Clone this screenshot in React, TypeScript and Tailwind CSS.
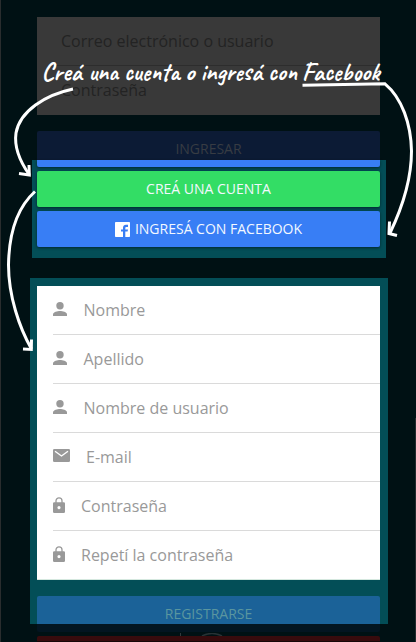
import React from 'react';

const PersonIcon = () => (
  <svg className="block h-[14px] w-[14px] shrink-0" viewBox="0 0 14 14" fill="#999">
    <circle cx="7" cy="3.7" r="3.7" />
    <path d="M0 14v-1.7C0 10 4.6 8.9 7 8.9s7 1.1 7 3.4V14z" />
  </svg>
);

const MailIcon = () => (
  <svg className="block h-[13px] w-[17px] shrink-0" viewBox="0 0 17 13" fill="#999">
    <rect width="17" height="13" rx="1.3" />
    <path d="M2 2.3 8.5 7 15 2.3" fill="none" stroke="#fff" strokeWidth="1.4" />
  </svg>
);

const LockIcon = () => (
  <svg className="block h-[16px] w-[12px] shrink-0" viewBox="0 0 12 16" fill="#999">
    <path d="M3 6V3.8a3 3 0 0 1 6 0V6" fill="none" stroke="#999" strokeWidth="1.3" />
    <path
      fillRule="evenodd"
      d="M1.3 5.3h9.4A1.3 1.3 0 0 1 12 6.6v8.1a1.3 1.3 0 0 1-1.3 1.3H1.3A1.3 1.3 0 0 1 0 14.7V6.6a1.3 1.3 0 0 1 1.3-1.3zM6 9a1.6 1.6 0 1 0 0 3.2A1.6 1.6 0 0 0 6 9z"
    />
  </svg>
);

const FacebookIcon = () => (
  <svg className="block h-[15px] w-[15px]" viewBox="0 0 15 15">
    <rect width="15" height="15" rx="0.8" fill="#fff" />
    <path
      d="M8 15V9.6H6V7.4h2V5.8C8 3.7 9.2 2.7 11 2.7h2v2.2h-1.4c-1 0-1.3.5-1.3 1.2v1.3H13l-.4 2.2h-2.3V15z"
      fill="#387ef5"
    />
  </svg>
);

const fields = [
  { label: 'Nombre', icon: <PersonIcon />, gap: 'gap-[16.5px]', lift: '-mt-0.5' },
  { label: 'Apellido', icon: <PersonIcon />, gap: 'gap-[16.5px]', lift: '-mt-0.5' },
  { label: 'Nombre de usuario', icon: <PersonIcon />, gap: 'gap-[16.5px]', lift: '-mt-0.5' },
  { label: 'E-mail', icon: <MailIcon />, gap: 'gap-4', lift: '-mt-[3px]' },
  { label: 'Contraseña', icon: <LockIcon />, gap: 'gap-4', lift: '-mt-0.5' },
  { label: 'Repetí la contraseña', icon: <LockIcon />, gap: 'gap-4', lift: '-mt-0.5' },
];

const words = [
  { text: 'Creá', x: 41.5, width: 40 },
  { text: 'una', x: 88.5, width: 29.5 },
  { text: 'cuenta', x: 124, width: 55.5 },
  { text: 'o', x: 185, width: 9.5 },
  { text: 'ingresá', x: 200.5, width: 61.5 },
  { text: 'con', x: 268, width: 29 },
  { text: 'Facebook', x: 302, width: 77.5 },
];

const Annotations = () => (
  <svg
    className="pointer-events-none absolute -left-px top-0 h-[642px] w-[416px]"
    viewBox="0 0 416 642"
    fill="none"
    stroke="#fff"
    strokeWidth="3"
  >
    <g
      fill="#fff"
      stroke="none"
      className="font-['Caveat','Caveat_Brush','Open_Sans',cursive] text-[25px] font-bold"
    >
      {words.map((w) => (
        <text key={w.text} x={w.x} y="80" textLength={w.width} lengthAdjust="spacingAndGlyphs">
          {w.text}
        </text>
      ))}
    </g>
    <path d="M73 89C45 95 20 111 16 133c-2 14 5 30 13.500 42" />
    <path d="M19 173.500 29.300 175 29 165" />
    <path d="M35 191.500C19 206 9 230 8.500 265c0 31 11 63 23 84" />
    <path d="M23 349 31.300 349.500 31.500 339.500" />
    <path d="M302.500 85.200 385 83.800C402 98 411 124 411.500 151c0 28-9 56-21.500 82" />
    <path d="M389.500 221.500 389 233.500 397 235.500" />
  </svg>
);

export default function App() {
  return (
    <div className="relative h-[642px] w-[416px] overflow-hidden border-l border-[#292d2e] bg-[#001114] font-['Open_Sans',sans-serif]">
      <div className="ml-9 mt-[17px] h-[98px] w-[343px] bg-[#393939] pl-4 text-base text-[#232323]">
        <div className="flex h-[49px] items-center border-b border-[#2d2d2d] pl-2">
          Correo electrónico o usuario
        </div>
        <div className="flex h-12 items-center pl-2">Contraseña</div>
      </div>

      <div className="ml-9 mt-4 h-[29px] w-[343px] rounded-t-[2px] bg-[#0c1b35] pt-2 text-center text-sm leading-5 text-[#373c43]">
        INGRESAR
      </div>
      <section className="ml-[31px] flex h-[98px] w-[354px] flex-col gap-1 bg-[#034e57] pl-[5px] pr-[6px] text-sm text-[#f3f8ff]">
        <div className="h-[7px] shrink-0 rounded-b-[2px] bg-[#387ef5] shadow-[0_1px_3px_rgba(0,0,0,0.5)]" />
        <button className="flex h-9 shrink-0 items-center justify-center rounded-[2px] bg-[#33dd65] shadow-[0_1px_3px_rgba(0,0,0,0.5)]">
          CREÁ UNA CUENTA
        </button>
        <button className="flex h-9 shrink-0 items-center justify-center gap-[5px] rounded-[2px] bg-[#387ef5] shadow-[0_1px_3px_rgba(0,0,0,0.5)]">
          <FacebookIcon />
          INGRESÁ CON FACEBOOK
        </button>
      </section>

      <section className="ml-[29px] mt-5 h-[346px] w-[358px] bg-[#034e57] pl-[7px] pr-2 pt-2">
        <div className="h-[294px] border-b border-[#d5e8df] bg-white pl-4">
          {fields.map((f) => (
            <div
              key={f.label}
              className={`flex h-[49px] items-center border-b border-[#dadada] text-base text-[#999] last:border-transparent ${f.gap}`}
            >
              <div className={f.lift}>{f.icon}</div>
              <span>{f.label}</span>
            </div>
          ))}
        </div>
        <div className="mt-4 h-7 rounded-t-[2px] bg-[#1b6298] pt-2 text-center text-sm leading-5 text-[#5a969f]">
          REGISTRARSE
        </div>
      </section>
      <div className="ml-9 h-2 w-[343px] rounded-b-[2px] bg-[#031521]" />
      <div className="ml-9 flex h-1 w-[343px] items-end pl-[143px]">
        <div className="h-[3px] w-px bg-[#303a3c]" />
        <svg className="ml-[19px] block h-[3px] w-6" viewBox="0 0 24 3">
          <path d="M2 3Q12-2 22 3" fill="none" stroke="#273235" strokeWidth="1.5" />
        </svg>
      </div>
      <div className="ml-9 h-[6px] w-[343px] rounded-t-[2px] border-b border-[#170607] bg-[#380b0d]" />
      <div className="absolute right-0 top-[418px] h-[224px] w-px bg-[#222b2d]" />
      <Annotations />
    </div>
  );
}
